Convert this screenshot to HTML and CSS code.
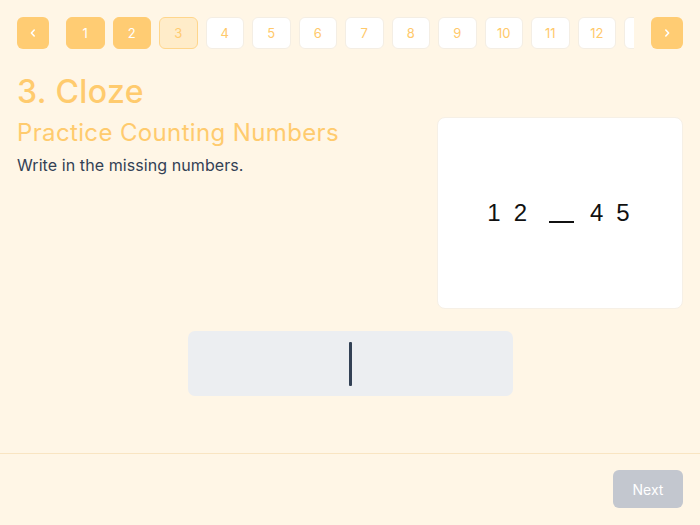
FILE: index.html
```html
<!DOCTYPE html>
<html lang="en">
<head>
<meta charset="utf-8">
<title>Cloze</title>
<link rel="stylesheet" href="styles.css">
</head>
<body>
<div class="page">
  <nav class="pager">
    <button class="arrow" aria-label="Previous">
      <svg width="10" height="10" viewBox="0 0 10 10"><polyline points="6.2,2 3.4,5 6.2,8" fill="none" stroke="#fff" stroke-width="1.6" stroke-linecap="round" stroke-linejoin="round"/></svg>
    </button>
    <div class="pages">
      <span class="pg done">1</span>
      <span class="pg done">2</span>
      <span class="pg current">3</span>
      <span class="pg">4</span>
      <span class="pg">5</span>
      <span class="pg">6</span>
      <span class="pg">7</span>
      <span class="pg">8</span>
      <span class="pg">9</span>
      <span class="pg">10</span>
      <span class="pg">11</span>
      <span class="pg">12</span>
      <span class="pg"></span>
    </div>
    <button class="arrow" aria-label="Next page">
      <svg width="10" height="10" viewBox="0 0 10 10"><polyline points="3.8,2 6.6,5 3.8,8" fill="none" stroke="#fff" stroke-width="1.6" stroke-linecap="round" stroke-linejoin="round"/></svg>
    </button>
  </nav>

  <main class="content">
    <h1 class="title">3. Cloze</h1>
    <div class="question">
      <div class="prompt">
        <h2 class="subtitle">Practice Counting Numbers</h2>
        <p class="instruction">Write in the missing numbers.</p>
      </div>
      <div class="card">
        <div class="sequence">
          <span class="num">1</span>
          <span class="num">2</span>
          <span class="blank"></span>
          <span class="num">4</span>
          <span class="num">5</span>
        </div>
      </div>
    </div>
    <div class="answer">
      <div class="input"><span class="caret"></span></div>
    </div>
  </main>

  <footer class="footer">
    <button class="next">Next</button>
  </footer>
</div>
</body>
</html>
```

FILE: styles.css
```css
* { box-sizing: border-box; }

html, body {
  margin: 0;
  padding: 0;
}

body {
  background: #fff6e6;
  font-family: Inter, "Liberation Sans", Arial, sans-serif;
  color: #334155;
}

.page {
  height: 525px;
  display: flex;
  flex-direction: column;
}

.pager {
  display: flex;
  align-items: center;
  gap: 17px;
  padding: 17px 17px 0 17px;
}

.arrow {
  width: 32px;
  height: 32px;
  flex: 0 0 32px;
  border: none;
  border-radius: 6px;
  background: #ffcc73;
  padding: 0;
  display: flex;
  align-items: center;
  justify-content: center;
}

.pages {
  flex: 1;
  display: flex;
  gap: 8px;
  overflow: hidden;
}

.pg {
  flex: 0 0 38.5px;
  height: 32px;
  border-radius: 6px;
  background: #ffffff;
  border: 1px solid #f4eee4;
  color: #ffc96b;
  font-size: 13px;
  display: flex;
  align-items: center;
  justify-content: center;
}

.pg.done {
  background: #ffcc73;
  border-color: #ffcc73;
  color: #ffffff;
}

.pg.current {
  background: #ffecc9;
  border-color: #ffd68c;
  color: #ffcb70;
}

.content {
  flex: 1;
  padding: 0 17px;
}

.title {
  margin: 23px 0 0 0;
  font-size: 32px;
  line-height: 40px;
  font-weight: 500;
  letter-spacing: 0.4px;
  color: #ffcb6e;
}

.question {
  margin-top: 5px;
  display: flex;
  justify-content: space-between;
  align-items: flex-start;
}

.subtitle {
  margin: 0;
  font-size: 24px;
  line-height: 32px;
  font-weight: 400;
  letter-spacing: 0.36px;
  color: #ffcb6e;
}

.instruction {
  margin: 4px 0 0 0;
  font-size: 16px;
  line-height: 24px;
  letter-spacing: 0.08px;
  color: #334155;
}

.card {
  width: 246px;
  height: 192px;
  background: #ffffff;
  border: 1px solid #f6f0e6;
  border-radius: 8px;
  display: flex;
  align-items: center;
  justify-content: center;
}

.sequence {
  display: flex;
  align-items: baseline;
  gap: 13px;
  font-family: "Liberation Sans", Arial, sans-serif;
  font-size: 24px;
  color: #111111;
  margin-left: -3px;
}

.blank {
  width: 25px;
  height: 2px;
  background: #111111;
  margin: 0 3px 0 9px;
  align-self: flex-end;
  position: relative;
  top: -4px;
}

.answer {
  margin-top: 22px;
  display: flex;
  justify-content: center;
}

.input {
  width: 325px;
  height: 65px;
  background: #eceef1;
  border-radius: 7px;
  display: flex;
  align-items: center;
  justify-content: center;
}

.caret {
  width: 3px;
  height: 44px;
  background: #334155;
  border-radius: 1px;
}

.footer {
  height: 72px;
  border-top: 1px solid #f9e5c2;
  padding: 16px 17px 17px 17px;
  display: flex;
  justify-content: flex-end;
  align-items: flex-start;
}

.next {
  width: 70px;
  height: 38px;
  border: none;
  border-radius: 6px;
  background: #c3c7cf;
  color: #ffffff;
  font-family: Inter, "Liberation Sans", Arial, sans-serif;
  font-size: 14px;
  padding: 0;
}
```
